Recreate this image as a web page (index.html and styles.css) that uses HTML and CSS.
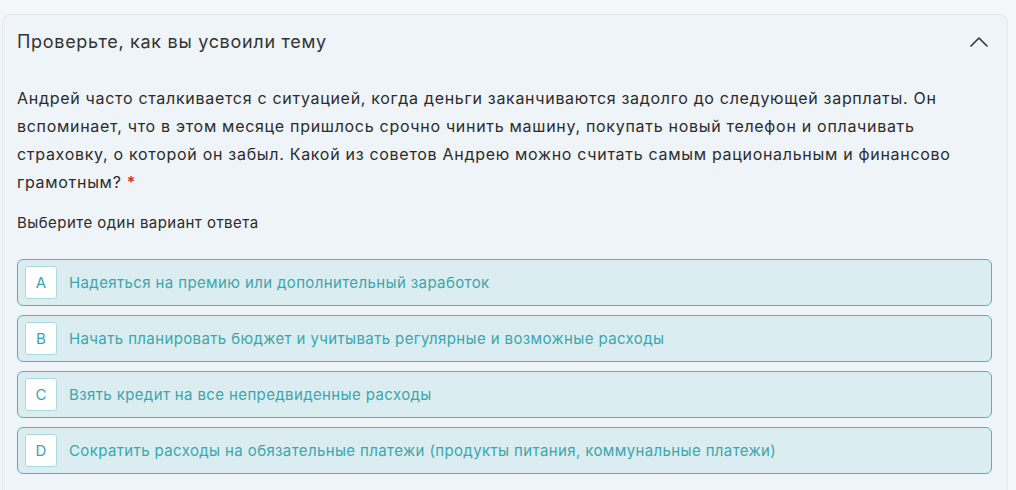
FILE: index.html
```html
<!DOCTYPE html>
<html lang="ru">
<head>
    <meta charset="UTF-8">
    <meta name="viewport" content="width=device-width, initial-scale=1.0">
    <title>Проверьте, как вы усвоили тему</title>
    <link rel="stylesheet" href="styles.css">
</head>
<body>
    <div class="quiz-card">
        <div class="quiz-header">
            <h2>Проверьте, как вы усвоили тему</h2>
            <svg class="chevron" width="18" height="10" viewBox="0 0 18 10">
                <path d="M1 9 L9 1 L17 9" fill="none" stroke="#333" stroke-width="1.6" stroke-linecap="round" stroke-linejoin="round"/>
            </svg>
        </div>
        <div class="quiz-body">
            <p class="question">Андрей часто сталкивается с ситуацией, когда деньги заканчиваются задолго до следующей зарплаты. Он вспоминает, что в этом месяце пришлось срочно чинить машину, покупать новый телефон и оплачивать страховку, о которой он забыл. Какой из советов Андрею можно считать самым рациональным и финансово грамотным?&nbsp;<span class="required">*</span></p>
            <p class="hint">Выберите один вариант ответа</p>
            <div class="options">
                <div class="option">
                    <span class="letter">A</span>
                    <span class="option-text">Надеяться на премию или дополнительный заработок</span>
                </div>
                <div class="option">
                    <span class="letter">B</span>
                    <span class="option-text">Начать планировать бюджет и учитывать регулярные и возможные расходы</span>
                </div>
                <div class="option">
                    <span class="letter">C</span>
                    <span class="option-text">Взять кредит на все непредвиденные расходы</span>
                </div>
                <div class="option">
                    <span class="letter">D</span>
                    <span class="option-text">Сократить расходы на обязательные платежи (продукты питания, коммунальные платежи)</span>
                </div>
            </div>
        </div>
    </div>
</body>
</html>
```

FILE: styles.css
```css
html, body {
    height: 100%;
    overflow: hidden;
}
body {
    font-family: Inter, "Noto Sans", sans-serif;
    background-color: #f5f6f8;
    margin: 0;
    padding: 14px 8px 0 2px;
    color: #2d2d2d;
    box-sizing: border-box;
}
.quiz-card {
    background: #eff4f8;
    border: 1px solid #e3e7eb;
    border-radius: 9px;
    height: 500px;
}
.quiz-header {
    display: flex;
    justify-content: space-between;
    align-items: center;
    padding: 13px 19px 14px 14px;
}
.quiz-header h2 {
    margin: 0;
    font-size: 18px;
    font-weight: 400;
    line-height: 28px;
    letter-spacing: 0.7px;
    color: #333;
}
.chevron {
    display: block;
}
.quiz-body {
    padding: 14px 15px 0 14px;
}
.question {
    margin: 0;
    font-size: 16px;
    line-height: 28px;
    letter-spacing: 0.7px;
    color: #2b2b2b;
}
.required {
    color: #d93025;
    font-weight: 600;
}
.hint {
    margin: 16px 0 0;
    font-size: 15px;
    line-height: 22px;
    letter-spacing: 0.45px;
    color: #2b2b2b;
}
.options {
    margin-top: 25px;
    display: flex;
    flex-direction: column;
    gap: 9px;
}
.option {
    display: flex;
    align-items: center;
    gap: 12px;
    height: 45px;
    padding: 0 7px;
    background: #dbedf0;
    border: 1px solid #4db6bb;
    border-radius: 6px;
}
.letter {
    width: 30px;
    height: 31px;
    display: flex;
    align-items: center;
    justify-content: center;
    background: #fff;
    border: 1px solid #a9dadd;
    border-radius: 3px;
    color: #3aa6ad;
    font-size: 15px;
}
.option-text {
    color: #3aa6ad;
    font-size: 15px;
    letter-spacing: 0.38px;
}
```
